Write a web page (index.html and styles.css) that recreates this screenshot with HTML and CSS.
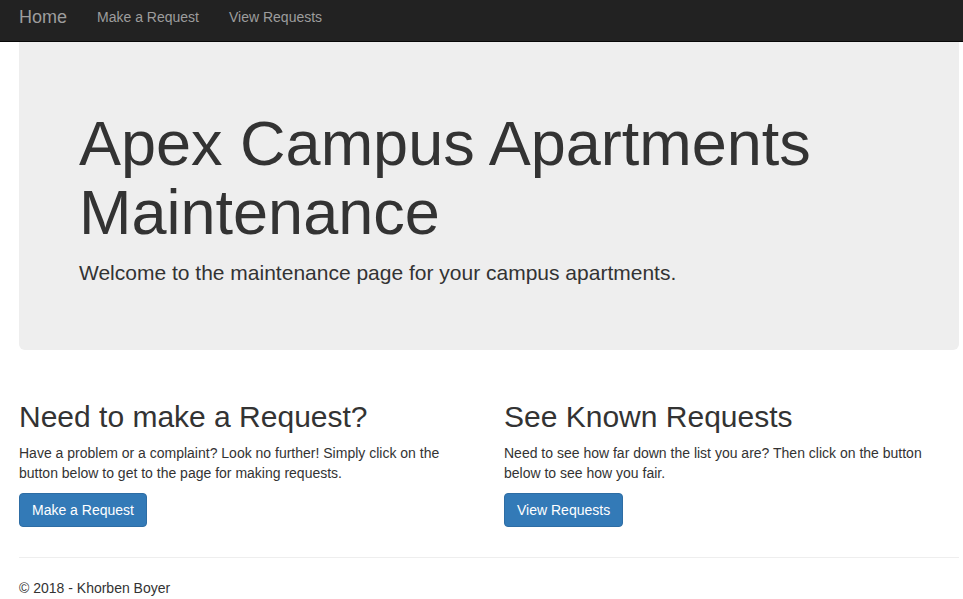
FILE: index.html
```html
<!DOCTYPE html>
<html>
<head>
<meta charset="utf-8">
<title>Apex Campus Apartments Maintenance</title>
<link rel="stylesheet" href="styles.css">
</head>
<body>
<nav class="navbar">
  <div class="navbar-inner">
    <a class="brand" href="#">Home</a>
    <ul class="nav">
      <li><a href="#">Make a Request</a></li>
      <li><a href="#">View Requests</a></li>
    </ul>
  </div>
</nav>
<div class="container">
  <div class="jumbotron">
    <h1>Apex Campus Apartments Maintenance</h1>
    <p class="lead">Welcome to the maintenance page for your campus apartments.</p>
  </div>
  <div class="row">
    <div class="col">
      <h2>Need to make a Request?</h2>
      <p>Have a problem or a complaint? Look no further! Simply click on the button below to get to the page for making requests.</p>
      <p><a class="btn" href="#">Make a Request</a></p>
    </div>
    <div class="col">
      <h2>See Known Requests</h2>
      <p>Need to see how far down the list you are? Then click on the button below to see how you fair.</p>
      <p><a class="btn" href="#">View Requests</a></p>
    </div>
  </div>
  <hr class="rule">
  <footer class="footer">
    <p>&copy; 2018 - Khorben Boyer</p>
  </footer>
</div>
</body>
</html>
```
FILE: styles.css
```css
* { box-sizing: border-box; }
html, body { margin: 0; padding: 0; }
body {
  font-family: "Liberation Sans", Arial, Helvetica, sans-serif;
  font-size: 14px;
  line-height: 20px;
  color: #333;
  background: #fff;
}
a { text-decoration: none; }

.navbar {
  background: #222;
  border-bottom: 1px solid #080808;
  height: 42px;
}
.navbar-inner {
  display: flex;
  align-items: center;
  height: 41px;
  padding-left: 4px;
}
.brand {
  color: #9d9d9d;
  font-size: 18px;
  line-height: 20px;
  padding: 0 15px;
  margin-top: -8px;
}
.nav {
  list-style: none;
  margin: 0;
  padding: 0;
  display: flex;
}
.nav a {
  display: block;
  color: #9d9d9d;
  font-size: 14px;
  line-height: 20px;
  padding: 0 15px;
  margin-top: -8px;
}

.container {
  width: 940px;
  margin-left: 19px;
}

.jumbotron {
  background: #eee;
  padding: 47px 60px 48px;
  border-radius: 0 0 6px 6px;
  margin-bottom: 30px;
}
.jumbotron h1 {
  font-size: 63px;
  line-height: 1.1;
  font-weight: 500;
  margin: 20px 0 10px;
  color: #333;
}
.lead {
  font-size: 21px;
  line-height: 1.4;
  font-weight: 300;
  margin: 0 0 15px;
}

.row {
  display: grid;
  grid-template-columns: 1fr 1fr;
  column-gap: 30px;
}
.col h2 {
  font-size: 30px;
  line-height: 1.1;
  font-weight: 500;
  margin: 20px 0 10px;
}
.col p {
  margin: 0 0 10px;
}

.btn {
  display: inline-block;
  padding: 6px 12px;
  font-size: 14px;
  line-height: 20px;
  color: #fff;
  background: #337ab7;
  border: 1px solid #2e6da4;
  border-radius: 4px;
}

.rule {
  margin: 20px 0;
  border: 0;
  border-top: 1px solid #eee;
}
.footer p {
  margin: 0 0 10px;
}
```
